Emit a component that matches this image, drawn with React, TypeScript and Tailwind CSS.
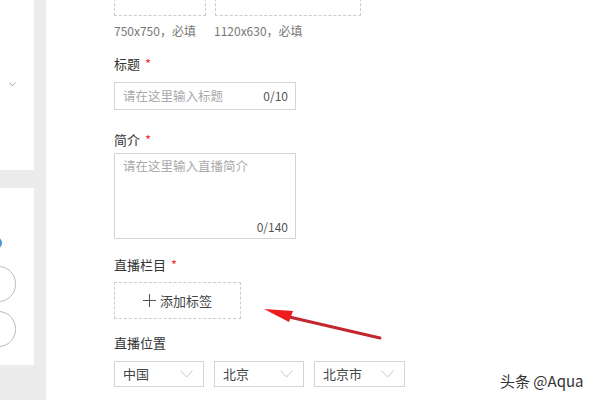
import React from "react";

const cn = '"Microsoft YaHei", "Noto Sans CJK SC", "Noto Sans", sans-serif';

const Chevron = ({ className }: { className?: string }) => (
  <svg className={className} width="13" height="8" viewBox="0 0 13 8" fill="none">
    <path d="M0.5 0.5 L6.5 7 L12.5 0.5" stroke="#c8c8c8" strokeWidth="1" />
  </svg>
);

const Label = ({ text, req }: { text: string; req?: boolean }) => (
  <div className="text-[13px] leading-[16px] text-[#333]">
    {text}
    {req && <span className="ml-[5px] text-[#e33]">*</span>}
  </div>
);

const Select = ({ value, w }: { value: string; w: string }) => (
  <div className={`flex h-[26px] items-center justify-between border border-[#d4d4d4] pl-[8px] pr-[10px] ${w}`}>
    <span className="text-[13px] leading-[16px] text-[#444]">{value}</span>
    <Chevron />
  </div>
);

export default function App() {
  return (
    <div className="relative flex h-[400px] w-[600px] overflow-hidden bg-[#ececec]" style={{ fontFamily: cn }}>
      {/* left column, mostly cut off */}
      <div className="flex w-[34px] shrink-0 flex-col">
        <div className="flex h-[170px] flex-col bg-white pl-[9px] pt-[82px]">
          <svg width="7" height="5" viewBox="0 0 7 5" fill="none">
            <path d="M0.5 0.5 L3.5 4 L6.5 0.5" stroke="#aaa" strokeWidth="1" />
          </svg>
        </div>
        <div className="mt-[18px] flex h-[177px] flex-col overflow-hidden bg-white">
          <div className="ml-[-10px] mt-[49px] h-[12px] w-[12px] rounded-full bg-[#4a8fe0]" />
          <div className="ml-[-19px] mt-[17px] h-[36px] w-[35px] rounded-full border border-[#bbb]" />
          <div className="ml-[-19px] mt-[9px] h-[36px] w-[35px] rounded-full border border-[#bbb]" />
        </div>
      </div>

      {/* main form */}
      <div className="ml-[12px] flex flex-1 flex-col bg-white pl-[68px]">
        <div className="mt-[-70px] flex gap-[9px]">
          <div className="h-[86px] w-[92px] border border-dashed border-[#ccc]" />
          <div className="h-[86px] w-[146px] border border-dashed border-[#ccc]" />
        </div>
        <div className="mt-[8px] flex text-[12px] leading-[14px] text-[#777]">
          <span className="w-[100px]">750x750，必填</span>
          <span>1120x630，必填</span>
        </div>

        <div className="mt-[18px]">
          <Label text="标题" req />
        </div>
        <div className="mt-[10px] flex h-[28px] w-[182px] items-center justify-between border border-[#d4d4d4] pl-[8px] pr-[7px]">
          <span className="text-[12.5px] leading-[16px] text-[#aaa]">请在这里输入标题</span>
          <span className="text-[12px] leading-[16px] text-[#555]">0/10</span>
        </div>

        <div className="mt-[22px]">
          <Label text="简介" req />
        </div>
        <div className="mt-[5px] flex h-[86px] w-[182px] flex-col justify-between border border-[#d4d4d4] pb-[3px] pl-[8px] pr-[7px] pt-[4px]">
          <span className="text-[12.5px] leading-[16px] text-[#aaa]">请在这里输入直播简介</span>
          <span className="self-end text-[12px] leading-[16px] text-[#555]">0/140</span>
        </div>

        <div className="mt-[18px]">
          <Label text="直播栏目" req />
        </div>
        <div className="mt-[9px] flex h-[37px] w-[127px] items-center justify-center gap-[4px] border border-dashed border-[#ccc]">
          <svg width="13" height="13" viewBox="0 0 13 13" fill="none">
            <path d="M6.5 0 V13 M0 6.5 H13" stroke="#555" strokeWidth="1" />
          </svg>
          <span className="text-[13px] leading-[16px] text-[#444]">添加标签</span>
        </div>

        <div className="mt-[16px]">
          <Label text="直播位置" />
        </div>
        <div className="mt-[10px] flex gap-[10px]">
          <Select value="中国" w="w-[90px]" />
          <Select value="北京" w="w-[90px]" />
          <Select value="北京市" w="w-[91px]" />
        </div>
      </div>

      {/* red annotation arrow */}
      <svg className="absolute left-0 top-0" width="600" height="400" viewBox="0 0 600 400" fill="none">
        <line x1="380" y1="338" x2="285" y2="316" stroke="#c2262e" strokeWidth="3" strokeLinecap="round" />
        <polygon points="264,309 293,311 289,322" fill="#ee1c1c" />
      </svg>

      <div className="absolute left-[500px] top-[372px] text-[15px] leading-[18px] text-[#333]">头条 @Aqua</div>
    </div>
  );
}
